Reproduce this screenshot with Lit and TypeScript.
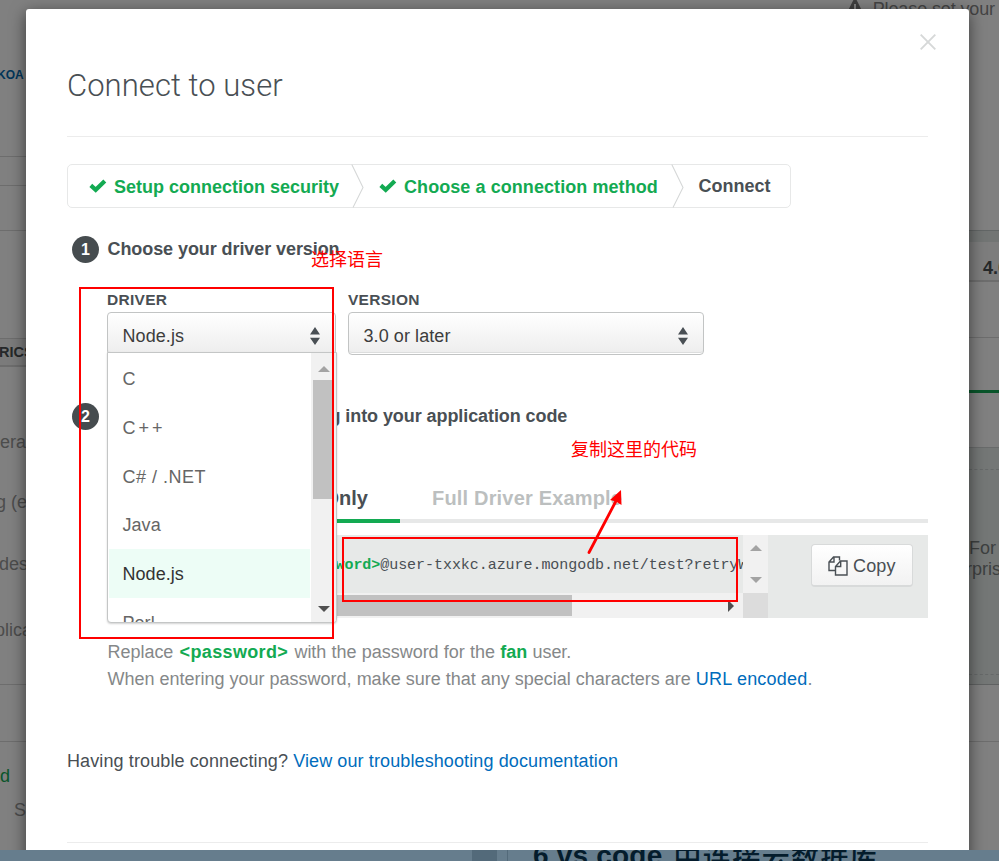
import { LitElement, html, css, svg } from "lit";
import { customElement, property } from "lit/decorators.js";

const check = html`<svg class="check" width="18" height="14" viewBox="0 0 18 14">
  <path d="M1.8 6.4 L6.7 10.8 L15.8 1.9" fill="none" stroke="#13aa52" stroke-width="4.2" />
</svg>`;

const chevron = html`<svg class="chevron" width="13" height="44" viewBox="0 0 13 44">
  <path d="M0.8 0.5 L12 23.5 L2 43.5" fill="none" stroke="#d6d8d8" stroke-width="1.1" />
</svg>`;

const sorter = html`<svg width="10" height="18" viewBox="0 0 10 18">
  <path d="M0 7.5 L5 0 L10 7.5 Z M0 10.7 H10 L5 18 Z" fill="#494f54" />
</svg>`;

const tri = (dir: string, color: string) => {
  const d: Record<string, string> = {
    up: "M0 6 L6 0 L12 6 Z",
    down: "M0 0 H12 L6 6 Z",
    right: "M0 0 L6 6 L0 12 Z",
  };
  return html`<svg width=${dir === "right" ? 6 : 12} height=${dir === "right" ? 12 : 6}>
    ${svg`<path d=${d[dir]} fill=${color} />`}
  </svg>`;
};

@customElement("page-behind")
class PageBehind extends LitElement {
  static styles = css`
    :host { display: flex; justify-content: space-between; height: 850px; color: #474747; font-size: 18px; }
    .left { width: 26px; overflow: hidden; }
    .right { width: 30px; }
    .row { display: flex; align-items: center; box-sizing: border-box; white-space: nowrap; }
    .line { border-bottom: 1px solid #6d6d6d; }
    .thick { border-bottom: 2px solid #6d6d6d; }
    .h7 { height: 7px; } .h12 { height: 12px; } .h18 { height: 18px; } .h20 { height: 20px; }
    .h28 { height: 28px; } .h29 { height: 29px; } .h32 { height: 32px; } .h36 { height: 36px; }
    .h40 { height: 40px; } .h45 { height: 45px; } .h52 { height: 52px; } .h54 { height: 54px; }
    .h56 { height: 56px; } .h57 { height: 57px; } .h60 { height: 60px; } .h61 { height: 61px; }
    .h62 { height: 62px; } .h70 { height: 70px; } .h108 { height: 108px; } .h150 { height: 150px; }
    .h212 { height: 212px; }
    .koa { font-weight: bold; font-size: 12px; color: #003559; text-indent: -3px; }
    .rics { font-weight: bold; font-size: 14.5px; color: #252829; background: #7b7b7b; text-indent: -1px; }
    .grey { color: #4c4c4c; }
    .cut3 { text-indent: -4px; }
    .cut1 { text-indent: -1px; }
    .cut6 { text-indent: -5px; }
    .green { color: #0a552a; }
    .s { padding-left: 14px; }
    .notice { height: 18px; justify-content: flex-end; padding-right: 4px; gap: 9px; color: #444; letter-spacing: -0.12px; }
    .notice svg { flex: none; }
    .band { background: #727574; border-top: 1px solid #626666; }
    .ver { font-weight: bold; color: #252829; padding: 14px 0 0 14px; overflow: hidden; background: #7d7d7d; }
    .rule { height: 3px; background: #09552a; }
    .panel { height: 238px; padding-top: 21px; box-sizing: border-box; background: #747776; border-top: 1px solid #696b6b; border-bottom: 1px solid #606262; overflow: hidden; }
    .dashed { height: 206px; box-sizing: border-box; border: dashed #666969; border-width: 1px 0; padding-top: 68px; line-height: 21px; color: #3d4040; white-space: nowrap; }
    .pull { text-indent: -3px; }
  `;
  render() {
    return html`
      <div class="left">
        <div class="row h150 koa">KOA</div>
        <div class="row h7 line"></div>
        <div class="row h29 line"></div>
        <div class="row h45 line"></div>
        <div class="row h108 line"></div>
        <div class="row h28 thick rics">RICS</div>
        <div class="row h45"></div>
        <div class="row h60 grey">era</div>
        <div class="row h61 grey cut3">g (e</div>
        <div class="row h62 grey cut1">des</div>
        <div class="row h70 grey cut6">plica</div>
        <div class="row h20 line"></div>
        <div class="row h57 line"></div>
        <div class="row h18"></div>
        <div class="row h32 green">d</div>
        <div class="row h36 grey s">S</div>
      </div>
      <div class="right">
        <div class="row notice">
          <svg width="18" height="20" viewBox="0 0 18 20">
            <path d="M9 0 L18 18 H0 Z" fill="#3f3f3f" stroke="#3f3f3f" stroke-width="2" stroke-linejoin="round" />
            <path d="M9 5 V12 M9 14 V16" stroke="#808080" stroke-width="2" />
          </svg>
          Please set your
        </div>
        <div class="row h212"></div>
        <div class="row h12 band"></div>
        <div class="row h40 thick ver">4.0.10</div>
        <div class="row h56 line"></div>
        <div class="row h52"></div>
        <div class="rule"></div>
        <div class="row h54"></div>
        <div class="panel">
          <div class="dashed"><div>For c</div><div class="pull">rprise</div></div>
        </div>
        <div class="row h57 line"></div>
      </div>
    `;
  }
}

@customElement("driver-menu")
class DriverMenu extends LitElement {
  @property({ type: Array }) items: string[] = [];
  @property() chosen = "";
  static styles = css`
    :host { display: flex; box-sizing: border-box; width: 230px; height: 271px; background: #fff; border: 1px solid #c4c6c6;
      border-radius: 0 0 4px 4px; box-shadow: 0 1px 2px rgba(0, 0, 0, 0.18); overflow: hidden; }
    .list { width: 203px; padding: 1px 0 0 1px; box-sizing: border-box; overflow: hidden; flex: none; }
    .item { height: 48.75px; line-height: 50px; padding-left: 13.5px; color: #666; font-size: 18px; letter-spacing: 0.05px; }
    .on { background: #edfdf6; color: #333; margin-right: 1px; }
    .wide { letter-spacing: 0.5px; }
    .plus { letter-spacing: 3px; }
    .bar { width: 25px; background: #f1f1f1; display: flex; flex-direction: column; align-items: center; padding: 13px 0 10px;
      box-sizing: border-box; gap: 8px; }
    .thumb { width: 21px; height: 119px; background: #c1c1c1; flex: none; }
    .down { margin-top: auto; display: flex; }
    svg { flex: none; }
  `;
  render() {
    return html`
      <div class="list">
        ${this.items.map((i) => {
          const spacing = i.includes("+") ? "plus" : i.includes("#") ? "wide" : "";
          return html`<div class="item ${i === this.chosen ? "on" : ""} ${spacing}">${i}</div>`;
        })}
      </div>
      <div class="bar">
        ${tri("up", "#a3a3a3")}
        <div class="thumb"></div>
        <div class="down">${tri("down", "#505050")}</div>
      </div>
    `;
  }
}

@customElement("app-root")
class AppRoot extends LitElement {
  static styles = css`
    :host { display: block; position: relative; width: 999px; height: 861px; overflow: hidden; background: #808080;
      font-family: "Liberation Sans", "Noto Sans CJK SC", sans-serif; font-size: 18px; color: #494f54; }
    .modal { position: absolute; left: 26px; top: 9px; width: 943px; height: 870px; box-sizing: border-box; background: #fff;
      border-radius: 3px; box-shadow: 0 4px 16px rgba(0, 0, 0, 0.55); padding: 0 41px; }
    .close { position: absolute; right: 33px; top: 25px; }
    .title { box-sizing: border-box; padding-top: 57px; line-height: 40px; font-family: Roboto, sans-serif; font-weight: 300;
      font-size: 31px; letter-spacing: 0.05px; border-bottom: 1px solid #ececec; height: 128px; }
    .steps { display: flex; align-items: center; width: 724px; height: 44px; box-sizing: border-box; margin-top: 27px;
      border: 1px solid #e7e8e8; border-radius: 5px; font-weight: bold; line-height: 42px; }
    .step { display: flex; align-items: center; color: #13aa52; height: 42px; white-space: nowrap; }
    .step span { position: relative; top: 1px; }
    .chevron { flex: none; margin: 0; }
    .check { margin-right: 7px; }
    .s1 { width: 283px; padding-left: 21px; box-sizing: border-box; }
    .s2 { width: 307px; padding-left: 15px; box-sizing: border-box; }
    .s3 { padding-left: 14.5px; color: #494f54; }
    .t2 { letter-spacing: 0.07px; }
    .heading { display: flex; align-items: center; height: 27px; font-weight: bold; padding-left: 5px; gap: 8.5px; white-space: nowrap; }
    .first { margin-top: 28px; }
    .ht { letter-spacing: -0.08px; }
    .num { width: 27px; height: 27px; border-radius: 50%; background: #464c4f; color: #fff; font-size: 16px; line-height: 27px; text-align: center; flex: none; }
    .fields { display: flex; gap: 12px; padding-left: 40px; margin-top: 28px; height: 64px; }
    .label { font-weight: bold; font-size: 15.5px; line-height: 18px; height: 21px; letter-spacing: 0.28px; }
    .select { display: flex; align-items: center; justify-content: space-between; box-sizing: border-box; height: 43px; padding: 4px 15px 0 14.5px;
      border: 1px solid #c2c4c4; border-radius: 4px; background: linear-gradient(#fff, #ededed); box-shadow: inset 0 -1px 0 #fff, inset 0 -2px 0 #dcdddd;
      color: #3d3d3d; letter-spacing: 0.08px; }
    .select span { padding-top: 1px; }
    .driver { width: 229px; position: relative; }
    .version { width: 356px; }
    driver-menu { position: absolute; left: 0; top: 61px; z-index: 2; }
    .second { margin-top: 48px; }
    .tabs { display: flex; margin: 50px 0 0 40px; border-bottom: 4px solid #e7e8e8; height: 43px; box-sizing: border-box; font-size: 20px;
      font-weight: bold; white-space: nowrap; }
    .tab { height: 43px; box-sizing: border-box; line-height: 36px; padding: 0 32px; }
    .on { border-bottom: 4px solid #13aa52; width: 293px; text-align: right; }
    .off { color: #bcbfbf; letter-spacing: 0.18px; }
    .code { display: flex; justify-content: space-between; margin: 12px 0 0 40px; height: 83px; background: #e7e9e8; }
    .scroller { display: grid; grid-template-columns: 636px 25px; grid-template-rows: 58px 25px; }
    .text { overflow: hidden; white-space: pre; font: 15px/61px "Liberation Mono", monospace; letter-spacing: -0.05px; padding-left: 228.5px; color: #494f54; }
    .text b, .pw { color: #13aa52; }
    .v { background: #f1f1f1; display: flex; flex-direction: column; justify-content: space-between; align-items: center; padding: 10px 0; box-sizing: border-box; }
    .h { background: #f1f1f1; display: flex; align-items: center; justify-content: space-between; padding-right: 9px; }
    .h .thumb { width: 465px; height: 21px; background: #c1c1c1; }
    .corner { background: #dcdcdc; }
    .copy { display: flex; align-items: center; gap: 5px; margin: 9px 15px 0 0; width: 102px; height: 43px; box-sizing: border-box; padding: 2px 0 0 16px;
      border: 1px solid #d8dada; border-bottom-width: 2px; border-radius: 4px; background: linear-gradient(#fff, #f2f2f2); letter-spacing: 0.15px; }
    .note { padding: 21px 0 0 40.5px; line-height: 27px; color: #858889; white-space: nowrap; }
    .l1 { letter-spacing: -0.03px; word-spacing: 0.3px; }
    .l1 .wide { letter-spacing: 0.35px; margin: 0 1px 0 1px; }
    .l2 { letter-spacing: 0; }
    .l2 .link { letter-spacing: 0.2px; }
    .link { color: #006cbc; }
    .help { margin-top: 55px; line-height: 27px; padding-bottom: 67px; border-bottom: 1px solid #ececec; white-space: nowrap; letter-spacing: 0.11px; }
    .footer { position: absolute; left: 0; top: 850px; width: 999px; height: 11px; overflow: hidden; background: #667d8d; display: flex; }
    .seam { margin-left: 472px; width: 25px; background: #536a7a; }
    .seam2 { width: 10px; border-right: 1px solid #536a7a; }
    .caption { margin-left: 25px; margin-top: -10px; font-weight: bold; font-size: 28px; line-height: 32px; color: #041c2c; white-space: nowrap; display: flex; gap: 11px; letter-spacing: 0.2px; }
    .cjk { font-family: "Noto Sans CJK SC", sans-serif; font-weight: 500; letter-spacing: 1.4px; }
    .mark { position: absolute; border: 2px solid #f00; box-sizing: border-box; z-index: 3; }
    .m1 { left: 79px; top: 287px; width: 255px; height: 352px; }
    .m2 { left: 342px; top: 537px; width: 396px; height: 65px; }
    .say { position: absolute; z-index: 3; color: #f00; font: 400 18px/24px "Noto Sans CJK SC", sans-serif; white-space: nowrap; }
    .a1 { left: 311px; top: 246px; }
    .a2 { left: 571px; top: 436px; }
    .arrow { position: absolute; left: 580px; top: 485px; z-index: 3; }
  `;
  render() {
    return html`
      <page-behind></page-behind>
      <div class="modal">
        <svg class="close" width="16" height="16" viewBox="0 0 16 16">
          <path d="M0.7 0.7 L15.3 15.3 M15.3 0.7 L0.7 15.3" stroke="#d6d8d8" stroke-width="1.9" />
        </svg>
        <div class="title">Connect to user</div>
        <div class="steps">
          <div class="step s1">${check}<span class="t1">Setup connection security</span></div>
          ${chevron}
          <div class="step s2">${check}<span class="t2">Choose a connection method</span></div>
          ${chevron}
          <div class="step s3">Connect</div>
        </div>
        <div class="heading first"><div class="num">1</div><span class="ht">Choose your driver version</span></div>
        <div class="fields">
          <div class="driver">
            <div class="label">DRIVER</div>
            <div class="select"><span>Node.js</span>${sorter}</div>
            <driver-menu .items=${["C", "C++", "C# / .NET", "Java", "Node.js", "Perl"]} chosen="Node.js"></driver-menu>
          </div>
          <div class="version">
            <div class="label">VERSION</div>
            <div class="select"><span>3.0 or later</span>${sorter}</div>
          </div>
        </div>
        <div class="heading second"><div class="num">2</div><span class="ht">Add your connection string into your application code</span></div>
        <div class="tabs">
          <div class="tab on">Connection String Only</div>
          <div class="tab off">Full Driver Example</div>
        </div>
        <div class="code">
          <div class="scroller">
            <div class="text"><b>word&gt;</b>@user-txxkc.azure.mongodb.net/test?retryWrites=true</div>
            <div class="v">${tri("up", "#a3a3a3")}${tri("down", "#a3a3a3")}</div>
            <div class="h"><div class="thumb"></div>${tri("right", "#505050")}</div>
            <div class="corner"></div>
          </div>
          <div class="copy">
            <svg width="20" height="20" viewBox="0 0 20 20" fill="none" stroke="#494f54" stroke-width="1.4">
              <path d="M7.5 14.5 H1 V6 L5.5 1 H11.5 V4.5 M6 1 V6 H1" />
              <path d="M12.5 5 H19 V19 H7.5 V10.5 Z M12.7 5 V10.5 H7.5" />
            </svg>
            Copy
          </div>
        </div>
        <div class="note">
          <div class="l1">Replace <b class="pw wide">&lt;password&gt;</b> with the password for the <b class="pw">fan</b> user.</div>
          <div class="l2">When entering your password, make sure that any special characters are <span class="link">URL encoded</span>.</div>
        </div>
        <div class="help">Having trouble connecting? <span class="link">View our troubleshooting documentation</span></div>
      </div>
      <div class="footer">
        <div class="seam"></div>
        <div class="seam2"></div>
        <div class="caption"><span>6 vs code</span><span class="cjk">中连接云数据库</span></div>
      </div>
      <div class="mark m1"></div>
      <div class="mark m2"></div>
      <div class="say a1">选择语言</div>
      <div class="say a2">复制这里的代码</div>
      <svg class="arrow" width="50" height="75" viewBox="0 0 50 75">
        <path d="M9 67.5 L36 16" stroke="#f00" stroke-width="2.8" stroke-linecap="round" />
        <path d="M41 5 L41.5 20 L36 16.5 L30 15 Z" fill="#f00" />
      </svg>
    `;
  }
}
